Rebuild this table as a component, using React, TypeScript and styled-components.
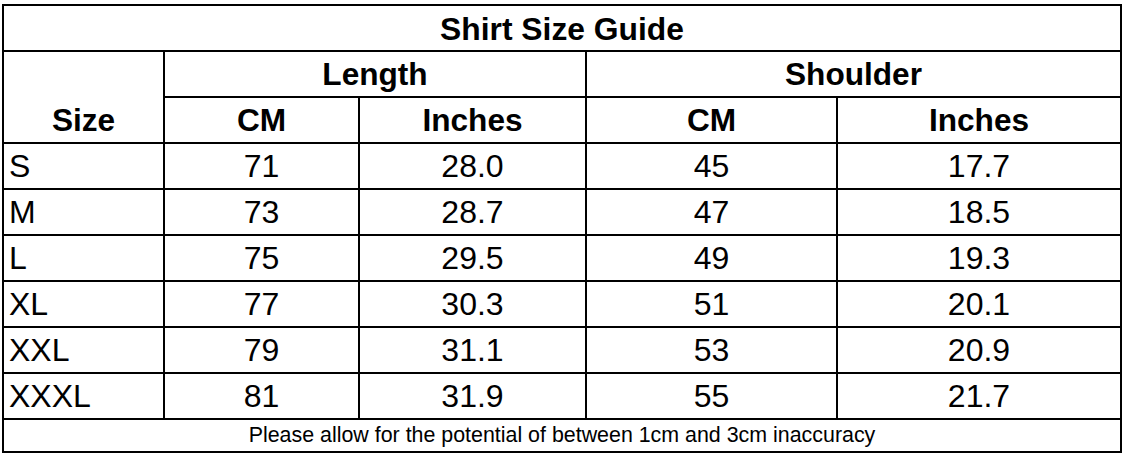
import { createGlobalStyle } from 'styled-components';
import styled from 'styled-components';

const GlobalStyle = createGlobalStyle`
  body {
    margin: 0;
    background: #fff;
    font-family: "Liberation Sans", Arial, sans-serif;
    color: #000;
  }
`;

const Page = styled.div`
  padding: 4px 0 0 2px;
`;

const Grid = styled.div`
  display: grid;
  width: fit-content;
  grid-template-columns: 159px 193px 225px 249px 282px;
  grid-template-rows: repeat(9, 44px) 31px;
  gap: 2px;
  padding: 2px;
  background: #000;
`;

const Cell = styled.div<{ $bold?: boolean; $left?: boolean; $span?: number; $rows?: number }>`
  background: #fff;
  display: flex;
  align-items: flex-end;
  justify-content: ${(p) => (p.$left ? 'flex-start' : 'center')};
  padding: 0 0 3px ${(p) => (p.$left ? '5px' : '0')};
  font-size: ${(p) => (p.$bold ? '31.6px' : '32px')};
  font-weight: ${(p) => (p.$bold ? 700 : 400)};
  white-space: nowrap;
  ${(p) => (p.$span ? `grid-column: span ${p.$span};` : '')}
  ${(p) => (p.$rows ? `grid-row: span ${p.$rows};` : '')}
`;

const Title = styled(Cell)`
  grid-column: 1 / -1;
  font-size: 31.8px;
  padding-bottom: 2px;
`;

const Note = styled(Cell)`
  grid-column: 1 / -1;
  font-size: 21.4px;
  padding-bottom: 3px;
`;

const rows = [
  ['S', '71', '28.0', '45', '17.7'],
  ['M', '73', '28.7', '47', '18.5'],
  ['L', '75', '29.5', '49', '19.3'],
  ['XL', '77', '30.3', '51', '20.1'],
  ['XXL', '79', '31.1', '53', '20.9'],
  ['XXXL', '81', '31.9', '55', '21.7'],
];

export default function App() {
  return (
    <Page>
      <GlobalStyle />
      <Grid>
        <Title $bold>Shirt Size Guide</Title>
        <Cell $bold $rows={2}>Size</Cell>
        <Cell $bold $span={2}>Length</Cell>
        <Cell $bold $span={2}>Shoulder</Cell>
        <Cell $bold>CM</Cell>
        <Cell $bold>Inches</Cell>
        <Cell $bold>CM</Cell>
        <Cell $bold>Inches</Cell>
        {rows.map((r) =>
          r.map((v, i) => (
            <Cell key={r[0] + i} $left={i === 0}>
              {v}
            </Cell>
          ))
        )}
        <Note>Please allow for the potential of between 1cm and 3cm inaccuracy</Note>
      </Grid>
    </Page>
  );
}
